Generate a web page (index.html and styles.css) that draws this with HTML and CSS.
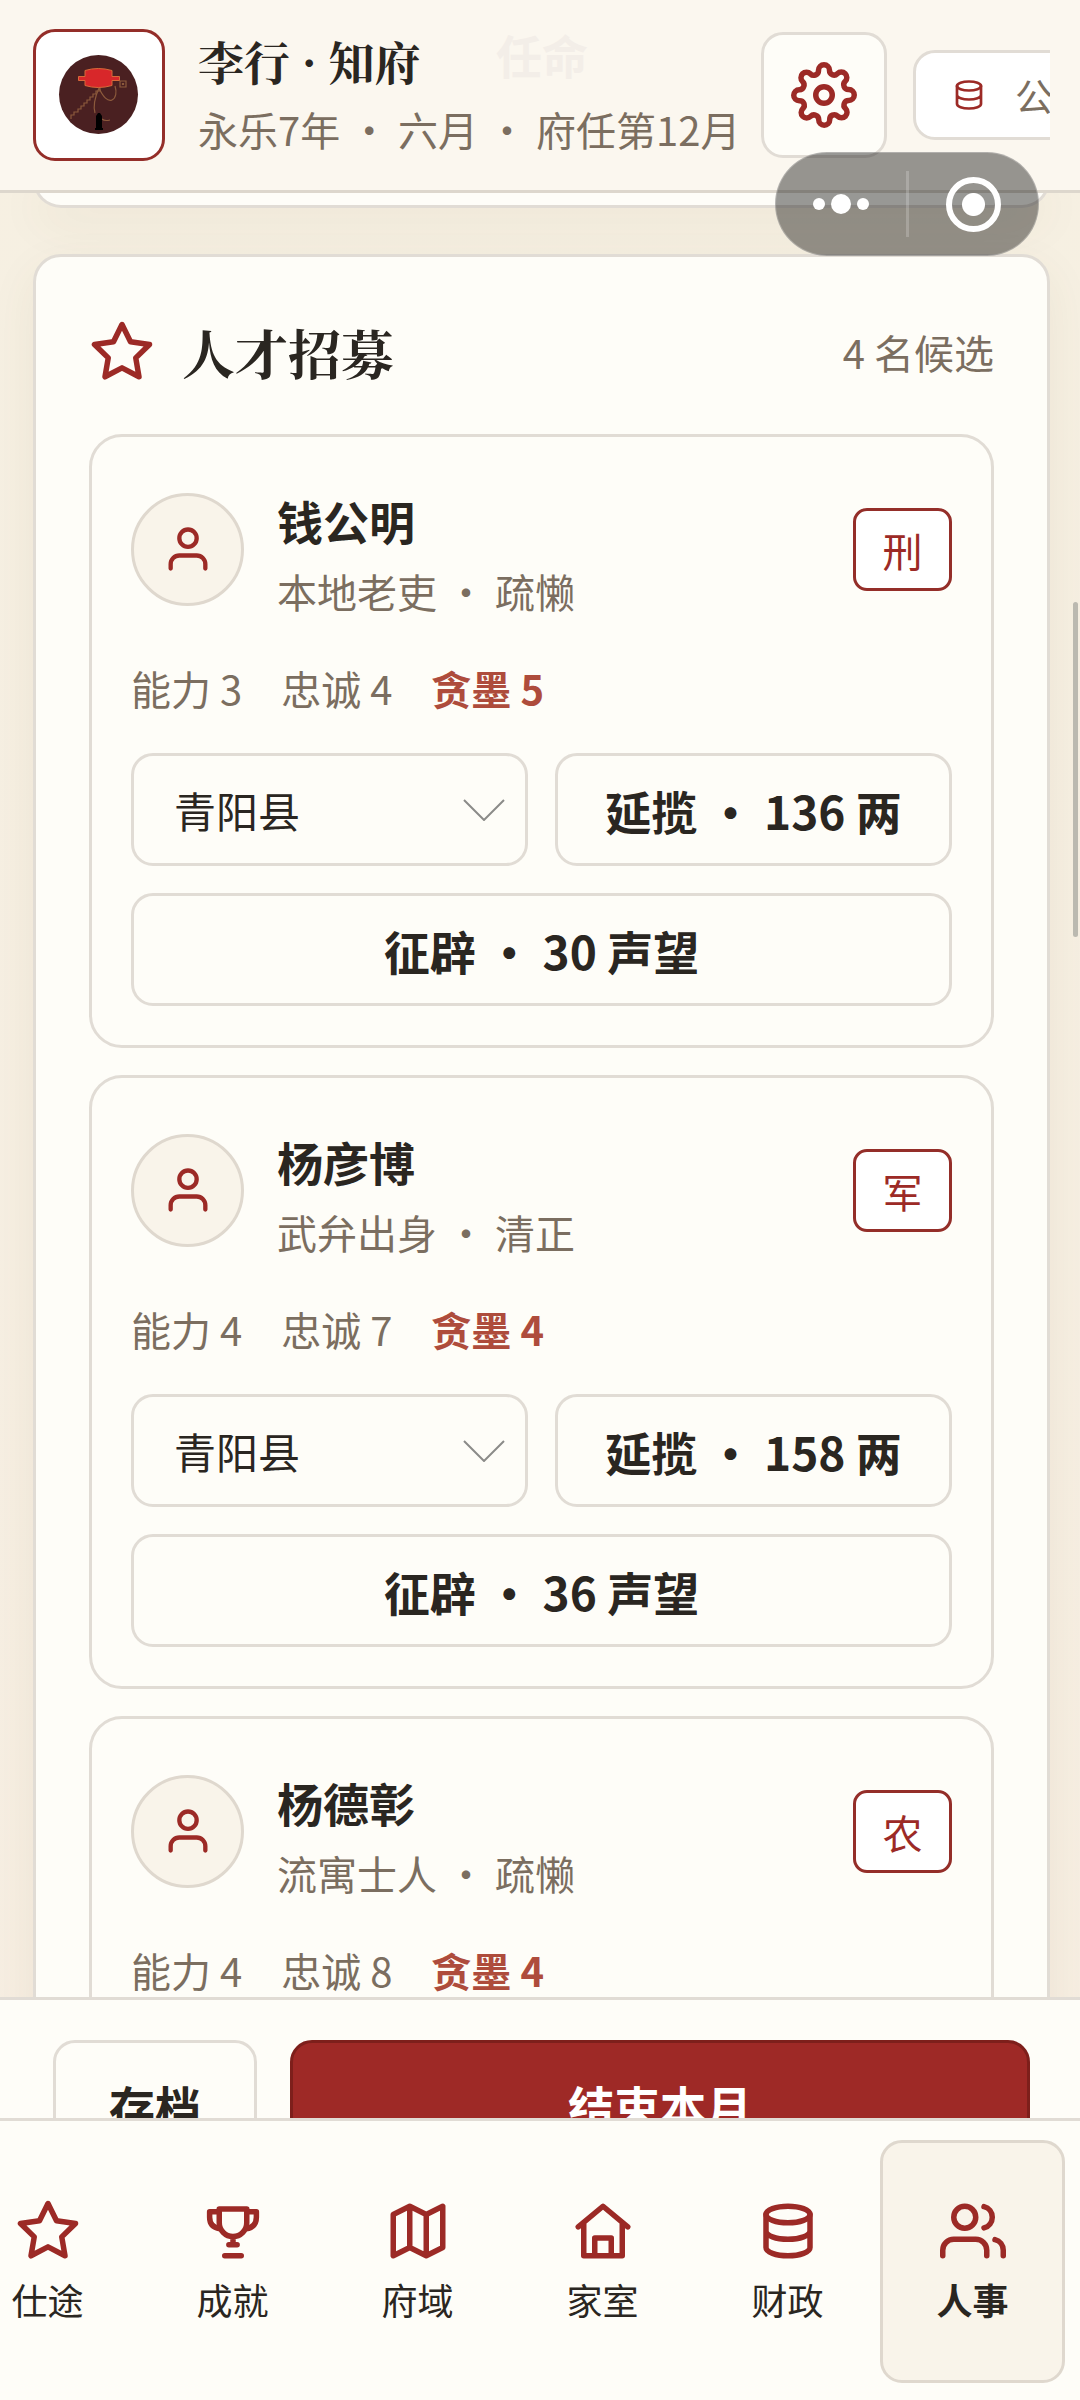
FILE: index.html
```html
<!DOCTYPE html>
<html lang="zh-CN">
<head>
    <meta charset="UTF-8">
    <meta name="viewport" content="width=device-width, initial-scale=1.0">
    <title>人事</title>
    <link rel="stylesheet" href="styles.css">
</head>
<body>
    <!-- icon sprite -->
    <svg class="sprite" aria-hidden="true">
        <symbol id="i-gear" viewBox="0 0 24 24">
            <circle cx="12" cy="12" r="3"/>
            <path d="M19.4 15a1.65 1.65 0 0 0 .33 1.82l.06.06a2 2 0 0 1 0 2.83 2 2 0 0 1-2.83 0l-.06-.06a1.65 1.65 0 0 0-1.82-.33 1.65 1.65 0 0 0-1 1.51V21a2 2 0 0 1-2 2 2 2 0 0 1-2-2v-.09A1.65 1.65 0 0 0 9 19.4a1.65 1.65 0 0 0-1.82.33l-.06.06a2 2 0 0 1-2.83 0 2 2 0 0 1 0-2.83l.06-.06a1.65 1.65 0 0 0 .33-1.82 1.65 1.65 0 0 0-1.51-1H3a2 2 0 0 1-2-2 2 2 0 0 1 2-2h.09A1.65 1.65 0 0 0 4.6 9a1.65 1.65 0 0 0-.33-1.82l-.06-.06a2 2 0 0 1 0-2.83 2 2 0 0 1 2.83 0l.06.06a1.65 1.65 0 0 0 1.82.33H9a1.65 1.65 0 0 0 1-1.51V3a2 2 0 0 1 2-2 2 2 0 0 1 2 2v.09a1.65 1.65 0 0 0 1 1.51 1.65 1.65 0 0 0 1.82-.33l.06-.06a2 2 0 0 1 2.83 0 2 2 0 0 1 0 2.83l-.06.06a1.65 1.65 0 0 0-.33 1.82V9a1.65 1.65 0 0 0 1.51 1H21a2 2 0 0 1 2 2 2 2 0 0 1-2 2h-.09a1.65 1.65 0 0 0-1.51 1z"/>
        </symbol>
        <symbol id="i-coins" viewBox="0 0 24 24">
            <ellipse cx="12" cy="6" rx="8" ry="3"/>
            <path d="M4 6v12a8 3 0 0 0 16 0V6M4 12a8 3 0 0 0 16 0"/>
        </symbol>
        <symbol id="i-star" viewBox="0 0 24 24">
            <path d="M12 2l3.09 6.26L22 9.27l-5 4.87 1.18 6.88L12 17.77l-6.18 3.25L7 14.14 2 9.27l6.91-1.01z"/>
        </symbol>
        <symbol id="i-user" viewBox="0 0 24 24">
            <path d="M20 21v-2a4 4 0 0 0-4-4H8a4 4 0 0 0-4 4v2"/>
            <circle cx="12" cy="7" r="4"/>
        </symbol>
        <symbol id="i-users" viewBox="0 0 24 24">
            <path d="M17 21v-2a4 4 0 0 0-4-4H5a4 4 0 0 0-4 4v2M23 21v-2a4 4 0 0 0-3-3.87M16 3.13a4 4 0 0 1 0 7.75"/>
            <circle cx="9" cy="7" r="4"/>
        </symbol>
        <symbol id="i-trophy" viewBox="0 0 24 24">
            <path d="M7 4h10v5a5 5 0 0 1-10 0zM7 5H3.500v2c0 2.500 1.300 3.800 3.700 4.200M17 5h3.500v2c0 2.500-1.300 3.800-3.700 4.200M12 14v3M10.500 17h3M9 21h6"/>
        </symbol>
        <symbol id="i-map" viewBox="0 0 24 24">
            <path d="M3 6l6-3 6 3 6-3v15l-6 3-6-3-6 3zM9 3v15M15 6v15"/>
        </symbol>
        <symbol id="i-home" viewBox="0 0 24 24">
            <path d="M3 10.500L12 3l9 7.500M5 9v12h14V9M9 21v-6.500h6V21"/>
        </symbol>
        <symbol id="i-chevron" viewBox="0 0 42 22">
            <path d="M1 1l20 20L41 1"/>
        </symbol>
    </svg>

    <div class="app">
        <header class="topbar">
            <div class="ghost" aria-hidden="true">任命</div>
            <div class="portrait">
                <svg viewBox="0 0 126 126" aria-hidden="true">
                    <circle cx="62.500" cy="62.500" r="39.500" fill="#4a2021"/>
                    <g fill="none" stroke="#8c5a3c" stroke-width="1.200">
                        <path d="M64 56v3h-4v3h-3v3h-3v3h-3v3h-3v3h-3v3h-3v3h-4v3h-3v4"/>
                        <path d="M63 56c-4 9-6 18-4 25M63 56c4 9 9 14 13 12s5-8 3-14M66 87c2 2 4 2 8 1"/>
                        <path d="M84 49h6v6h-6zM86.500 51.500h1v1h-1z"/>
                    </g>
                    <path d="M42.500 44.500h6.500v-6q13-4 27 0v6h7.500v4H76v5q-14 4-27 0v-5h-6.500z" fill="#d8272a" stroke="#d86a3a"/>
                    <path d="M62 81h2l2 3v12h1v2h-8v-2h1V84z" fill="#000"/>
                </svg>
            </div>
            <div class="identity">
                <h1>李行 · 知府</h1>
                <p>永乐7年 ・ 六月 ・ 府任第12月</p>
            </div>
            <button class="gear" aria-label="设置"><svg class="icon"><use href="#i-gear"/></svg></button>
            <div class="resources">
                <div class="chip"><svg class="icon icon-sm"><use href="#i-coins"/></svg><span>公</span></div>
            </div>
        </header>

        <div class="capsule">
            <button class="capsule-more" aria-label="更多"><i></i><i class="big"></i><i></i></button>
            <button class="capsule-close" aria-label="关闭"><i></i></button>
        </div>

        <main class="content">
            <section class="panel panel-end"></section>

            <section class="panel">
                <div class="panel-head">
                    <svg class="icon"><use href="#i-star"/></svg>
                    <h2>人才招募</h2>
                    <span class="count">4 名候选</span>
                </div>

                <article class="candidate">
                    <div class="person">
                        <div class="avatar"><svg class="icon icon-md"><use href="#i-user"/></svg></div>
                        <div class="who">
                            <h3>钱公明</h3>
                            <p>本地老吏 ・ 疏懒</p>
                        </div>
                        <span class="badge">刑</span>
                    </div>
                    <div class="traits"><span>能力 3</span><span>忠诚 4</span><b>贪墨 5</b></div>
                    <div class="offers">
                        <div class="select">
                            <select aria-label="任所"><option>青阳县</option></select>
                            <svg class="chevron"><use href="#i-chevron"/></svg>
                        </div>
                        <button class="btn">延揽 ・ 136 两</button>
                        <button class="btn wide">征辟 ・ 30 声望</button>
                    </div>
                </article>

                <article class="candidate">
                    <div class="person">
                        <div class="avatar"><svg class="icon icon-md"><use href="#i-user"/></svg></div>
                        <div class="who">
                            <h3>杨彦博</h3>
                            <p>武弁出身 ・ 清正</p>
                        </div>
                        <span class="badge">军</span>
                    </div>
                    <div class="traits"><span>能力 4</span><span>忠诚 7</span><b>贪墨 4</b></div>
                    <div class="offers">
                        <div class="select">
                            <select aria-label="任所"><option>青阳县</option></select>
                            <svg class="chevron"><use href="#i-chevron"/></svg>
                        </div>
                        <button class="btn">延揽 ・ 158 两</button>
                        <button class="btn wide">征辟 ・ 36 声望</button>
                    </div>
                </article>

                <article class="candidate">
                    <div class="person">
                        <div class="avatar"><svg class="icon icon-md"><use href="#i-user"/></svg></div>
                        <div class="who">
                            <h3>杨德彰</h3>
                            <p>流寓士人 ・ 疏懒</p>
                        </div>
                        <span class="badge">农</span>
                    </div>
                    <div class="traits"><span>能力 4</span><span>忠诚 8</span><b>贪墨 4</b></div>
                </article>
            </section>
            <div class="scrollbar"></div>
        </main>

        <div class="actions">
            <button class="btn">存档</button>
            <button class="btn primary">结束本月</button>
        </div>

        <nav class="tabs">
            <a href="#career"><svg class="icon"><use href="#i-star"/></svg>仕途</a>
            <a href="#feats"><svg class="icon"><use href="#i-trophy"/></svg>成就</a>
            <a href="#domain"><svg class="icon"><use href="#i-map"/></svg>府域</a>
            <a href="#family"><svg class="icon"><use href="#i-home"/></svg>家室</a>
            <a href="#finance"><svg class="icon"><use href="#i-coins"/></svg>财政</a>
            <a href="#staff" class="active"><svg class="icon"><use href="#i-users"/></svg>人事</a>
        </nav>
    </div>
</body>
</html>
```
FILE: styles.css
```css
:root {
    --ink: #2a2621;
    --muted: #7b6e60;
    --red: #9c2a26;
    --line: #e1dcd5;
    --paper: #fefdf8;
    --cream: #f9f4ea;
}
* {
    box-sizing: border-box;
}
body {
    margin: 0;
    font-family: "Noto Sans CJK SC", sans-serif;
    font-size: 40px;
    line-height: 64px;
    color: var(--ink);
    background: linear-gradient(#f6f0e2, #f7eee2);
}
h1, h2, h3, p {
    margin: 0;
}
button, select {
    font-family: inherit;
    color: inherit;
    padding: 0;
}
.sprite {
    position: absolute;
    width: 0;
    height: 0;
}
.icon {
    display: block;
    flex: none;
    width: 66px;
    height: 66px;
    fill: none;
    stroke: var(--red);
    stroke-width: 2;
    stroke-linecap: round;
    stroke-linejoin: round;
}
.icon-md {
    width: 52px;
    height: 52px;
}
.icon-sm {
    width: 36px;
    height: 36px;
    stroke-width: 1.8;
}
.app {
    position: relative;
    display: flex;
    flex-direction: column;
    height: 100vh;
    overflow: hidden;
}

/* top bar */
.topbar {
    position: relative;
    display: flex;
    flex: none;
    align-items: center;
    gap: 26px;
    padding: 29px 30px 29px 33px;
    background: #fbf7ef;
    border-bottom: 3px solid #ddd7cd;
}
.ghost {
    position: absolute;
    top: 22px;
    left: 496px;
    font-size: 46px;
    font-weight: 700;
    color: #f3eee8;
}
.portrait {
    flex: none;
    width: 132px;
    height: 132px;
    border: 3px solid #942e29;
    border-radius: 22px;
    background: #fff;
}
.portrait svg {
    display: block;
}
.identity {
    flex: 1;
    min-width: 0;
    padding-left: 7px;
    white-space: nowrap;
}
.identity h1 {
    margin-bottom: 6px;
    font-family: "Noto Serif CJK SC", "Noto Sans CJK SC", serif;
    font-size: 46px;
    line-height: 62px;
}
.identity p {
    color: var(--muted);
}
.gear {
    display: grid;
    place-items: center;
    flex: none;
    width: 126px;
    height: 126px;
    border: 3px solid var(--line);
    border-radius: 22px;
    background: var(--paper);
}
.resources {
    flex: none;
    width: 137px;
    overflow: hidden;
}
.chip {
    display: flex;
    align-items: center;
    gap: 28px;
    width: max-content;
    height: 90px;
    padding: 0 35px;
    border: 3px solid var(--line);
    border-radius: 22px;
    background: #fff;
    color: var(--muted);
    font-size: 38px;
}

/* mini program capsule */
.capsule {
    position: absolute;
    z-index: 2;
    top: 152px;
    right: 41px;
    display: flex;
    align-items: center;
    width: 264px;
    height: 104px;
    border: 1px solid rgba(255, 255, 255, 0.25);
    border-radius: 52px;
    background: rgba(0, 0, 0, 0.4);
}
.capsule button {
    display: flex;
    flex: 1;
    align-items: center;
    justify-content: center;
    gap: 6px;
    height: 66px;
    border: 0;
    background: none;
}
.capsule i {
    width: 12px;
    height: 12px;
    border-radius: 50%;
    background: #fff;
}
.capsule .big {
    width: 20px;
    height: 20px;
}
.capsule .capsule-more {
    border-right: 3px solid rgba(255, 255, 255, 0.2);
}
.capsule-close i {
    width: 55px;
    height: 55px;
    border: 6px solid #fff;
    background: radial-gradient(circle, #fff 11px, transparent 12px);
}

/* content */
.content {
    position: relative;
    flex: 1;
    min-height: 0;
    overflow: hidden;
    padding: 0 30px 0 33px;
}
.panel {
    padding: 53px;
    border: 3px solid var(--line);
    border-radius: 28px;
    background: var(--paper);
    box-shadow: 0 16px 48px rgba(100, 85, 45, 0.07);
}
.panel-end {
    height: 28px;
    margin: -13px 0 46px;
    padding: 0;
    border-top: 0;
    border-radius: 0 0 28px 28px;
}
.panel-head {
    display: flex;
    align-items: center;
    gap: 27px;
    height: 84px;
    margin-bottom: 40px;
}
.panel-head h2 {
    flex: 1;
    font-family: "Noto Serif CJK SC", "Noto Sans CJK SC", serif;
    font-size: 53px;
}
.count {
    color: var(--muted);
}
.candidate {
    padding: 38px 39px 39px;
    border: 3px solid var(--line);
    border-radius: 33px;
}
.candidate + .candidate {
    margin-top: 27px;
}
.person {
    display: flex;
    align-items: center;
    gap: 33px;
}
.avatar {
    display: grid;
    place-items: center;
    flex: none;
    width: 113px;
    height: 113px;
    border: 3px solid #dfd8ce;
    border-radius: 50%;
    background: var(--cream);
}
.who {
    flex: 1;
    padding-top: 8px;
}
.who h3 {
    margin-bottom: 2px;
    font-size: 46px;
    line-height: 74px;
}
.who p {
    color: var(--muted);
}
.badge {
    width: 99px;
    height: 83px;
    border: 3px solid #942e29;
    border-radius: 14px;
    background: #fff;
    color: var(--red);
    line-height: 78px;
    text-align: center;
}
.traits {
    display: flex;
    gap: 39px;
    margin: 33px 0;
    color: var(--muted);
}
.traits b {
    color: #ae4c3c;
}
.offers {
    display: grid;
    grid-template-columns: 1fr 1fr;
    gap: 27px;
}
.btn, .select select {
    height: 113px;
    border: 3px solid var(--line);
    border-radius: 22px;
    background: var(--paper);
}
.btn {
    font-size: 46px;
    font-weight: 600;
}
.wide {
    grid-column: 1 / -1;
}
.select {
    position: relative;
}
.select select {
    appearance: none;
    display: block;
    width: 100%;
    padding: 0 40px;
    font-size: 42px;
}
.chevron {
    position: absolute;
    top: 46px;
    right: 23px;
    width: 42px;
    height: 22px;
    fill: none;
    stroke: #8b8b89;
    stroke-width: 2;
    pointer-events: none;
}
.scrollbar {
    position: absolute;
    top: 409px;
    right: 2px;
    width: 5px;
    height: 335px;
    border-radius: 3px;
    background: #bbb9b0;
}

/* month actions, the tab bar cuts them off */
.actions {
    display: flex;
    flex: none;
    gap: 33px;
    height: 121px;
    overflow: hidden;
    padding: 40px 50px 0 53px;
    border-top: 3px solid var(--line);
    background: var(--paper);
}
.actions .btn {
    width: 204px;
    height: 129px;
}
.actions .primary {
    flex: 1;
    border-color: #7d1f1b;
    background: #9e2926;
    color: #fff;
}

/* tabs */
.tabs {
    display: flex;
    flex: none;
    justify-content: flex-end;
    overflow: hidden;
    padding: 19px 15px 17px;
    border-top: 3px solid var(--line);
    background: var(--paper);
}
.tabs a {
    display: flex;
    flex: none;
    flex-direction: column;
    align-items: center;
    justify-content: center;
    gap: 12px;
    width: 185px;
    height: 243px;
    padding-bottom: 3px;
    border: 3px solid transparent;
    border-radius: 22px;
    color: inherit;
    font-size: 36px;
    line-height: 46px;
    text-decoration: none;
}
.tabs .active {
    border-color: #dfd8ce;
    background: var(--cream);
    font-weight: 600;
}
```
